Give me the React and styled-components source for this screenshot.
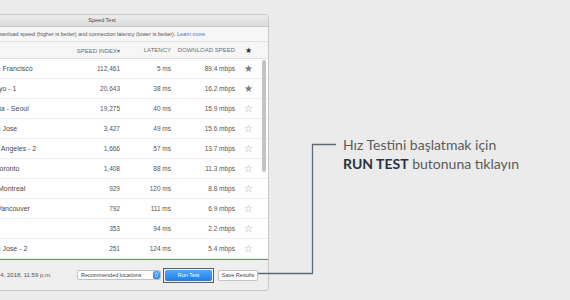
import styled, { createGlobalStyle } from 'styled-components'

const GlobalStyle = createGlobalStyle`
  html, body {
    margin: 0;
    padding: 0;
    background: #ebebeb;
  }
  body {
    width: 570px;
    height: 300px;
    overflow: hidden;
    font-family: "Liberation Sans", Arial, sans-serif;
  }
`

const servers = [
  { name: 'San Francisco', index: '112,461', latency: '5 ms', speed: '89.4 mbps', fav: true },
  { name: 'Tokyo - 1', index: '20,643', latency: '38 ms', speed: '16.2 mbps', fav: true },
  { name: 'Asia - Seoul', index: '19,275', latency: '40 ms', speed: '15.9 mbps', indent: 3 },
  { name: 'San Jose', index: '3,427', latency: '49 ms', speed: '15.6 mbps' },
  { name: 'Los Angeles - 2', index: '1,666', latency: '57 ms', speed: '13.7 mbps' },
  { name: 'Toronto', index: '1,408', latency: '88 ms', speed: '11.3 mbps', indent: 8 },
  { name: 'Montreal', index: '929', latency: '120 ms', speed: '8.8 mbps', indent: 10 },
  { name: 'Vancouver', index: '792', latency: '111 ms', speed: '6.9 mbps', indent: 9 },
  { name: 'Rio', index: '353', latency: '94 ms', speed: '2.2 mbps' },
  { name: 'San Jose - 2', index: '251', latency: '124 ms', speed: '5.4 mbps' },
]

const Page = styled.div`
  position: relative;
  display: flex;
  width: 570px;
  height: 300px;
`

const Window = styled.div`
  margin: 14px 0 0 -65px;
  width: 332px;
  height: 275px;
  border: 1px solid #c9c9c9;
  border-radius: 4px 4px 3px 3px;
  background: #eeeeee;
  display: flex;
  flex-direction: column;
  overflow: hidden;
  flex-shrink: 0;
`

const TitleBar = styled.div`
  height: 11px;
  line-height: 11px;
  text-align: center;
  font-size: 5.5px;
  color: #4a4a4a;
  background: linear-gradient(#ececec, #dcdcdc);
  border-bottom: 1px solid #c8c8c8;
`

const Description = styled.div`
  height: 14px;
  line-height: 14px;
  padding-left: 34px;
  font-size: 5.5px;
  color: #555;
  background: #f6f6f6;
  border-bottom: 1px solid #e2e2e2;
  white-space: nowrap;

  a {
    color: #3b7ad0;
    text-decoration: none;
  }
`

const Grid = styled.div`
  display: grid;
  grid-template-columns: 82px 50px 51px 64px 27px 1fr;
  padding-left: 52px;
  align-items: center;
`

const HeaderRow = styled(Grid)`
  height: 16px;
  font-size: 6px;
  color: #6f6f6f;
  background: #f6f6f6;
  border-bottom: 1px solid #e0e0e0;
`

const Cell = styled.div`
  text-align: ${(p) => (p.$align === 'left' ? 'left' : p.$align === 'center' ? 'center' : 'right')};
  white-space: nowrap;
`

const NameCell = styled(Cell)`
  padding-left: ${(p) => p.$indent || 0}px;
`

const HeaderStar = styled.span`
  font-size: 8px;
  color: #2f2f2f;
`

const Body = styled.div`
  position: relative;
  background: #ffffff;
  border-bottom: 1px solid #5f9e5a;
`

const Row = styled(Grid)`
  height: 19px;
  border-bottom: 1px solid #ececec;
  font-size: 7px;
  color: #4a4a4a;
`

const NumCell = styled(Cell)`
  font-size: 6.5px;
  color: #555;
`

const Star = styled.span`
  font-size: 10px;
  color: ${(p) => (p.$filled ? '#7a7a7a' : '#9a9a9a')};
  line-height: 1;
`

const ScrollThumb = styled.div`
  position: absolute;
  right: 2px;
  top: 1px;
  width: 4px;
  height: 112px;
  border-radius: 2px;
  background: #c3c3c3;
`

const Footer = styled.div`
  flex: 1;
  display: flex;
  align-items: center;
  padding-left: 52px;
  font-size: 6px;
  color: #555;
`

const DateText = styled.div`
  width: 89px;
  white-space: nowrap;
`

const Select = styled.div`
  width: 79px;
  height: 8px;
  border: 1px solid #c2c2c2;
  border-radius: 2px;
  background: #fff;
  display: flex;
  align-items: center;
  justify-content: space-between;
  padding-left: 3px;
  font-size: 5.5px;
  color: #444;
  white-space: nowrap;
`

const Stepper = styled.span`
  width: 7px;
  height: 8px;
  border-radius: 2px;
  background: linear-gradient(#5aa8f8, #2a84ec);
  display: flex;
  align-items: center;
  justify-content: center;
`

const FocusRing = styled.div`
  margin-left: 2px;
  padding: 1px;
  border: 1px solid #56636f;
  display: flex;
`

const RunButton = styled.button`
  width: 47px;
  height: 11px;
  border: none;
  border-radius: 2px;
  padding: 0;
  background: linear-gradient(#52a6f8, #1e7ee9);
  color: #fff;
  font-family: inherit;
  font-size: 5.5px;
`

const SaveButton = styled.button`
  margin-left: 4px;
  width: 40px;
  height: 11px;
  border: 1px solid #c4c4c4;
  border-radius: 2px;
  padding: 0;
  background: #fff;
  color: #444;
  font-family: inherit;
  font-size: 5.5px;
  white-space: nowrap;
`

const Callout = styled.div`
  padding: 135px 0 0 74px;
  font-family: Lato, "Open Sans", sans-serif;
  font-size: 14px;
  line-height: 19px;
  color: #5b5b5b;
  white-space: nowrap;

  strong {
    color: #2a3340;
    font-weight: 700;
  }
`

const Connector = styled.svg`
  position: absolute;
  left: 0;
  top: 0;
  pointer-events: none;
`

function StepperIcon() {
  return (
    <svg width="5" height="6" viewBox="0 0 5 6">
      <path d="M1 2.4 L2.5 1 L4 2.4 M1 3.6 L2.5 5 L4 3.6" stroke="#fff" strokeWidth="0.8" fill="none" />
    </svg>
  )
}

export default function App() {
  return (
    <>
      <GlobalStyle />
      <Page>
        <Window>
          <TitleBar>Speed Test</TitleBar>
          <Description>
            Sorted by download speed (higher is better) and connection latency (lower is better).{' '}
            <a href="#learn">Learn more</a>
          </Description>
          <HeaderRow>
            <Cell $align="left" />
            <Cell>SPEED INDEX▾</Cell>
            <Cell>LATENCY</Cell>
            <Cell>DOWNLOAD SPEED</Cell>
            <Cell $align="center">
              <HeaderStar>★</HeaderStar>
            </Cell>
            <Cell />
          </HeaderRow>
          <Body>
            {servers.map((server) => (
              <Row key={server.name}>
                <NameCell $align="left" $indent={server.indent}>
                  {server.name}
                </NameCell>
                <NumCell>{server.index}</NumCell>
                <NumCell>{server.latency}</NumCell>
                <NumCell>{server.speed}</NumCell>
                <Cell $align="center">
                  <Star $filled={server.fav}>{server.fav ? '★' : '☆'}</Star>
                </Cell>
                <Cell />
              </Row>
            ))}
            <ScrollThumb />
          </Body>
          <Footer>
            <DateText>Dec 4, 2018, 11:59 p.m.</DateText>
            <Select>
              Recommended locations
              <Stepper>
                <StepperIcon />
              </Stepper>
            </Select>
            <FocusRing>
              <RunButton type="button">Run Test</RunButton>
            </FocusRing>
            <SaveButton type="button">Save Results</SaveButton>
          </Footer>
        </Window>
        <Callout>
          Hız Testini başlatmak için
          <br />
          <strong>RUN TEST</strong> butonuna tıklayın
        </Callout>
        <Connector width="570" height="300">
          <path d="M258 273.5 H312.5 V144.5 H336" stroke="#5d6b79" strokeWidth="1.3" fill="none" />
        </Connector>
      </Page>
    </>
  )
}
